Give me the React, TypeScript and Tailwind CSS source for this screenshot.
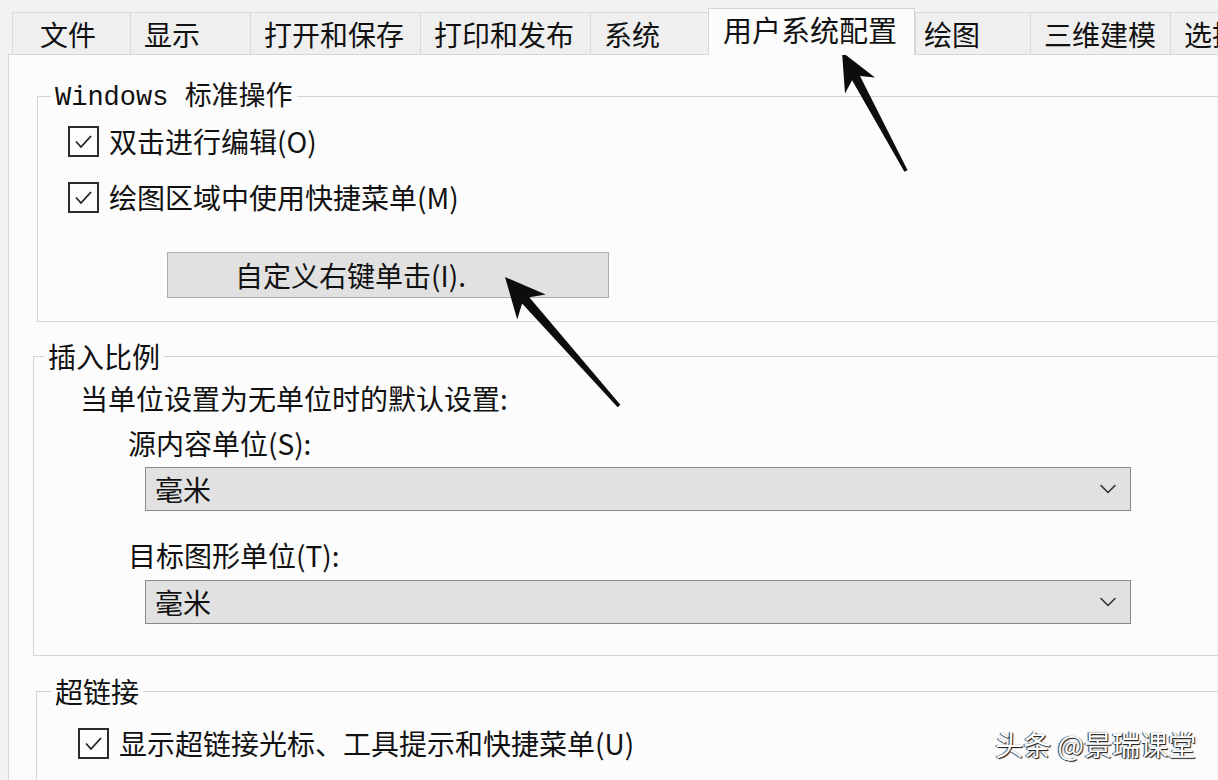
import React from 'react';
import { ChevronDown } from 'lucide-react';

const tabs = [
  { label: '文件', w: 'w-[118px]', pl: 'pl-[27px]' },
  { label: '显示', w: 'w-[120px]', pl: 'pl-[13px]' },
  { label: '打开和保存', w: 'w-[170px]', pl: 'pl-[13px]' },
  { label: '打印和发布', w: 'w-[170px]', pl: 'pl-[13px]' },
  { label: '系统', w: 'w-[118px]', pl: 'pl-[13px]' },
  { label: '用户系统配置', w: 'w-[207px]', pl: 'pl-[14px]', active: true },
  { label: '绘图', w: 'w-[115px]', pl: 'pl-[8px]' },
  { label: '三维建模', w: 'w-[140px]', pl: 'pl-[13px]' },
  { label: '选择', w: 'w-[80px]', pl: 'pl-[13px]' },
];

type Pt = [number, number];

// arrow polygon from tip to tail, head swept back a little
const arrowPoints = (tip: Pt, tail: Pt, headLen: number, headW: number, w0: number, w1: number) => {
  const dx = tail[0] - tip[0];
  const dy = tail[1] - tip[1];
  const len = Math.hypot(dx, dy);
  const u = [dx / len, dy / len];
  const n = [-u[1], u[0]];
  const at = (d: number, s: number): string =>
    `${tip[0] + u[0] * d + n[0] * s},${tip[1] + u[1] * d + n[1] * s}`;
  return [
    at(0, 0),
    at(headLen, headW),
    at(headLen * 0.78, w0),
    `${tail[0] + n[0] * w1},${tail[1] + n[1] * w1}`,
    `${tail[0] - n[0] * w1},${tail[1] - n[1] * w1}`,
    at(headLen * 0.78, -w0),
    at(headLen, -headW),
  ].join(' ');
};

const Check: React.FC<{ label: string }> = ({ label }) => (
  <div className="flex h-[32px] items-center gap-[10px]">
    <div className="flex h-[31px] w-[31px] items-center justify-center border-2 border-[#2b2b2b] bg-[#fdfdfd]">
      <svg width="21" height="21" viewBox="0 0 21 21">
        <polyline points="3,10.5 8,16 18,5" fill="none" stroke="#222" strokeWidth="1.8" />
      </svg>
    </div>
    <span className="text-[28px] leading-[32px]">{label}</span>
  </div>
);

const Select: React.FC<{ className?: string }> = ({ className }) => (
  <div
    className={`flex h-[44px] w-[986px] items-center justify-between border border-[#8a8a8a] bg-[#e1e1e1] pl-[9px] pr-[8px] ${className ?? ''}`}
  >
    <span className="text-[28px] leading-[32px]">毫米</span>
    <ChevronDown size={28} strokeWidth={1.4} color="#333" />
  </div>
);

const App: React.FC = () => {
  return (
    <div className="relative flex h-[780px] w-[1218px] flex-col overflow-hidden bg-[#f2f2f2] font-['Noto_Sans_CJK_SC',sans-serif] text-[#111]">
      {/* --- TAB STRIP --- */}
      <div className="flex h-[54px] shrink-0 items-end pl-[12px]">
        {tabs.map((t) =>
          t.active ? (
            <div
              key={t.label}
              className={`relative z-10 -mb-[1px] flex h-[47px] shrink-0 items-center border-x border-t border-[#d6d6d6] bg-[#fcfcfc] pb-[6px] ${t.w} ${t.pl}`}
            >
              <span className="text-[29px] leading-[32px]">{t.label}</span>
            </div>
          ) : (
            <div
              key={t.label}
              className={`flex h-[42px] shrink-0 items-center border-l border-t border-[#d9d9d9] bg-[#efefef] ${t.w} ${t.pl}`}
            >
              <span className="text-[28px] leading-[32px]">{t.label}</span>
            </div>
          )
        )}
      </div>

      {/* --- PANEL --- */}
      <div className="ml-[8px] flex-1 border-l border-t border-[#d6d6d6] bg-[#fcfcfc]">
        {/* Windows 标准操作 */}
        <fieldset className="ml-[28px] mt-[24px] w-[1250px] border border-[#d4d4d4] pb-[23px]">
          <legend className="ml-[13px] px-[4px] text-[27px] leading-[30px]">
            <span className="font-['Liberation_Mono','Noto_Sans_CJK_SC',monospace]">Windows </span>
            标准操作
          </legend>
          <div className="mt-[12px] flex flex-col gap-[24px] pl-[30px]">
            <Check label="双击进行编辑(O)" />
            <Check label="绘图区域中使用快捷菜单(M)" />
          </div>
          <button className="ml-[129px] mt-[39px] flex h-[46px] w-[442px] items-center border border-[#adadad] bg-[#e1e1e1] pl-[67px] text-[28px] leading-[32px]">
            自定义右键单击(I).
          </button>
        </fieldset>

        {/* 插入比例 */}
        <fieldset className="ml-[24px] mt-[19px] w-[1250px] border border-[#d4d4d4] pb-[31px]">
          <legend className="ml-[10px] px-[4px] text-[28px] leading-[30px]">插入比例</legend>
          <div className="ml-[46px] mt-[12px] text-[28px] leading-[30px]">当单位设置为无单位时的默认设置:</div>
          <div className="ml-[94px] mt-[15px] text-[28px] leading-[30px]">源内容单位(S):</div>
          <Select className="ml-[111px] mt-[9px]" />
          <div className="ml-[94px] mt-[29px] text-[28px] leading-[30px]">目标图形单位(T):</div>
          <Select className="ml-[111px] mt-[10px]" />
        </fieldset>

        {/* 超链接 */}
        <fieldset className="ml-[27px] mt-[20px] w-[1250px] border border-[#d4d4d4] pb-[30px]">
          <legend className="ml-[14px] px-[4px] text-[28px] leading-[30px]">超链接</legend>
          <div className="mt-[21px] pl-[41px]">
            <Check label="显示超链接光标、工具提示和快捷菜单(U)" />
          </div>
        </fieldset>
      </div>

      {/* annotation arrows drawn over the dialog */}
      <svg className="pointer-events-none absolute left-0 top-0" width="1218" height="780">
        <polygon points={arrowPoints([842, 52], [906, 171], 38, 17, 4.5, 1.8)} fill="#0d0d0d" />
        <polygon points={arrowPoints([505, 277], [619, 406], 40, 19, 4.8, 1.8)} fill="#0d0d0d" />
      </svg>

      {/* watermark */}
      <div className="pointer-events-none absolute bottom-[20px] right-[22px] text-[28px] leading-[32px] text-white [text-shadow:1px_1px_1px_#111,-1px_0_1px_#333]">
        头条 @景瑞课堂
      </div>
    </div>
  );
};

export default App;
